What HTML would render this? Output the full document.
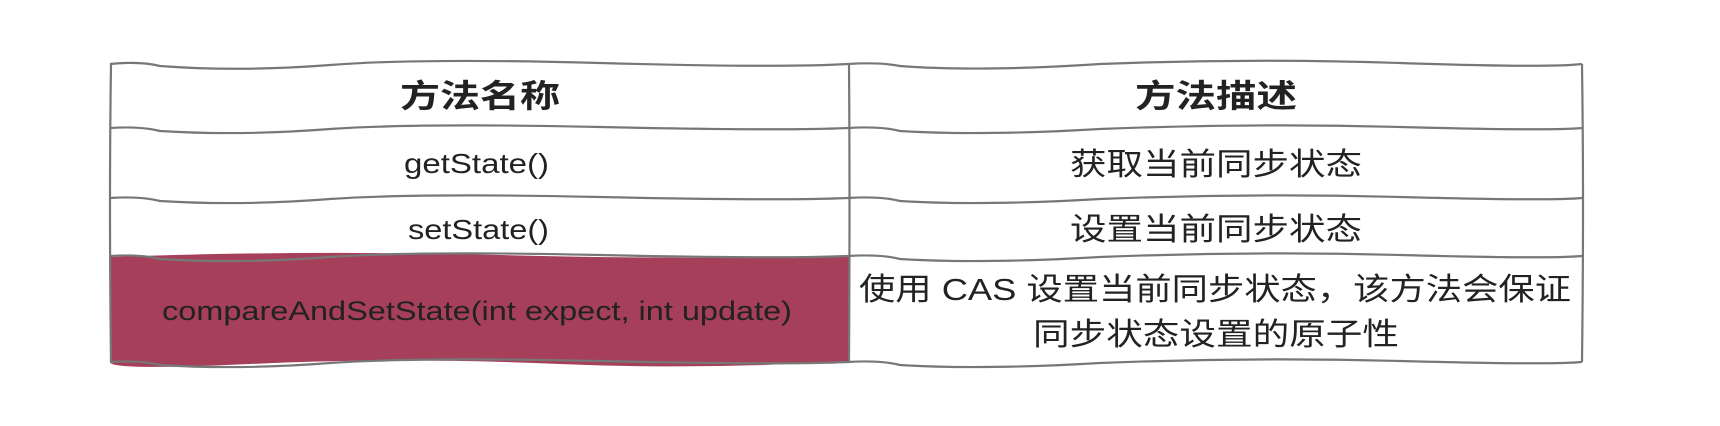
<!DOCTYPE html>
<html><head><meta charset="utf-8"><style>html,body{margin:0;padding:0;background:#fff}svg{display:block}</style></head>
<body>
<svg width="1720" height="426" viewBox="0 0 1720 426" xmlns="http://www.w3.org/2000/svg">
<path d="M111 257 Q300 250 500 255 T849 256 L849 361 Q700 370 560 364 Q400 357 250 364 T111 361 Z" fill="#a63f5a"/>
<g fill="none" stroke="#777" stroke-width="2.2">
<path d="M110 64 Q140 61 160 66 Q240 72 330 65 Q420 58 600 63 T848 64 Q880 62 900 66 Q980 72 1100 64 Q1250 58 1400 63 T1582 64"/>
<path d="M110 128 Q140 126 160 131 Q240 136 330 129 Q420 123 600 127 T848 128 Q880 126 900 131 Q980 136 1100 129 Q1250 123 1400 127 T1582 128"/>
<path d="M110 198 Q140 196 160 201 Q240 206 330 199 Q420 193 600 197 T848 198 Q880 196 900 201 Q980 206 1100 199 Q1250 193 1400 197 T1582 198"/>
<path d="M110 256 Q140 254 160 259 Q240 264 330 257 Q420 251 600 255 T848 256 Q880 254 900 259 Q980 264 1100 257 Q1250 251 1400 255 T1582 256"/>
<path d="M110 362 Q140 360 160 365 Q240 370 330 363 Q420 357 600 361 T848 362 Q880 360 900 365 Q980 370 1100 363 Q1250 357 1400 361 T1582 362"/>
<path d="M111 64 Q109 200 111 362"/>
<path d="M849 64 Q850 200 849 362"/>
<path d="M1582 64 Q1584 200 1582 362"/>
</g>
<g fill="#222" font-family="'Liberation Sans','Noto Sans CJK SC',sans-serif">
<text x="400" y="107" font-size="32" font-weight="bold" textLength="160" lengthAdjust="spacingAndGlyphs">方法名称</text>
<text x="1135" y="107" font-size="32" font-weight="bold" textLength="162" lengthAdjust="spacingAndGlyphs">方法描述</text>
<text x="404" y="173" font-size="28" textLength="145" lengthAdjust="spacingAndGlyphs">getState()</text>
<text x="1070" y="175" font-size="31" textLength="292" lengthAdjust="spacingAndGlyphs">获取当前同步状态</text>
<text x="408" y="239" font-size="28" textLength="141" lengthAdjust="spacingAndGlyphs">setState()</text>
<text x="1070" y="240" font-size="31" textLength="292" lengthAdjust="spacingAndGlyphs">设置当前同步状态</text>
<text x="162" y="320" font-size="27" textLength="630" lengthAdjust="spacingAndGlyphs">compareAndSetState(int expect, int update)</text>
<text x="859" y="300" font-size="31" textLength="712" lengthAdjust="spacingAndGlyphs">使用 CAS 设置当前同步状态，该方法会保证</text>
<text x="1033" y="345" font-size="31" textLength="366" lengthAdjust="spacingAndGlyphs">同步状态设置的原子性</text>
</g>
</svg>
</body></html>
